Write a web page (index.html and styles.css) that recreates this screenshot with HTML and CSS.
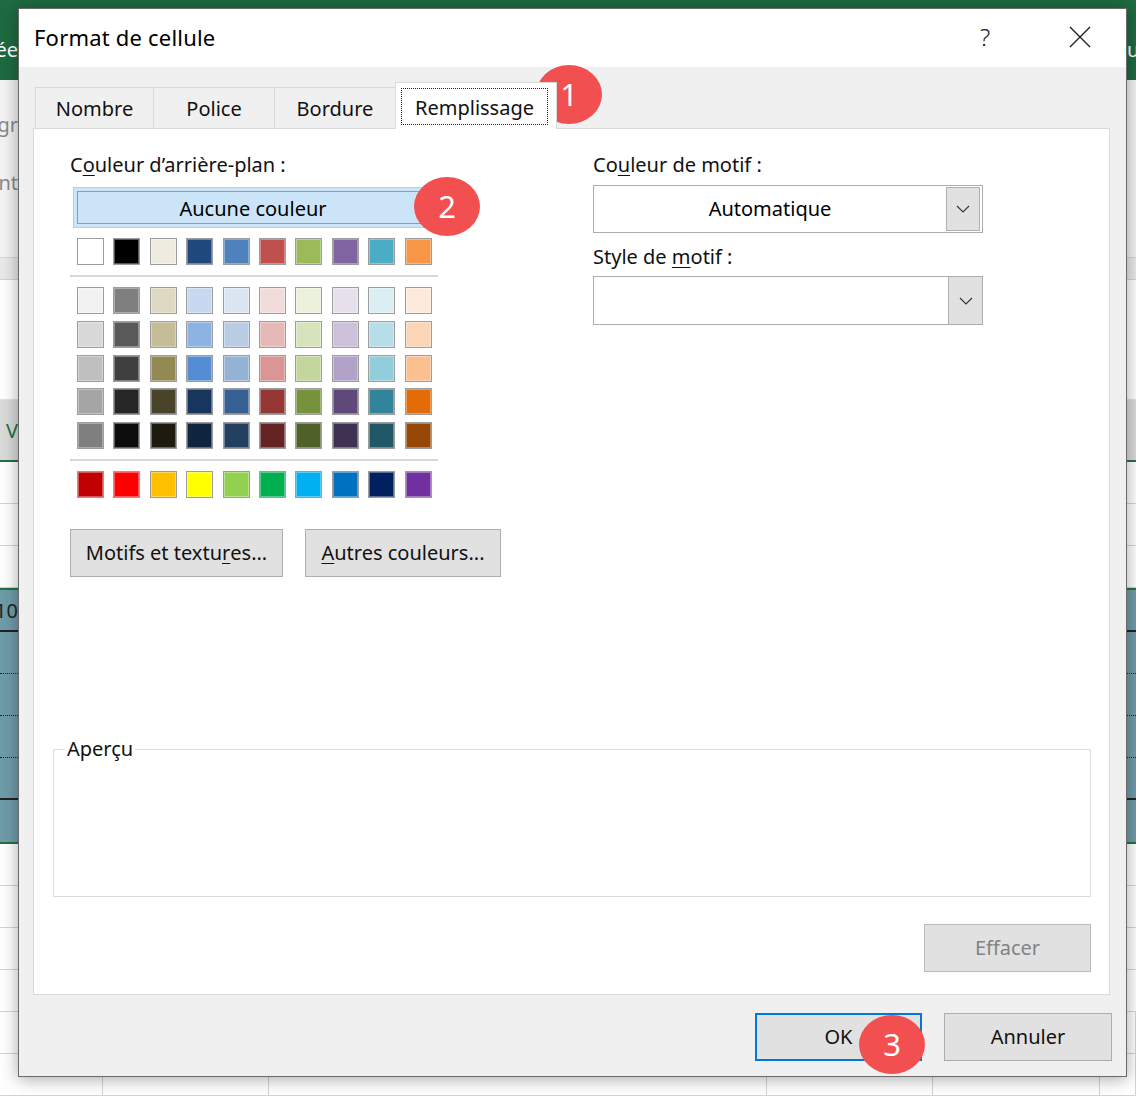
FILE: index.html
```html
<!DOCTYPE html>
<html lang="fr">
<head>
<meta charset="utf-8">
<title>Format de cellule</title>
<link rel="stylesheet" href="styles.css">
</head>
<body>
<div class="screen">
  <div class="sheet">
    <div class="srow ribbon-top"><div class="edge-l light">ée</div><div class="mid"></div><div class="edge-r light">u</div></div>
    <div class="srow ribbon">
      <div class="ribbon-line"><div class="edge-l grey">gr</div><div class="mid"></div><div class="edge-r"></div></div>
      <div class="ribbon-line"><div class="edge-l grey">nt</div><div class="mid"></div><div class="edge-r"></div></div>
    </div>
    <div class="srow formula"></div>
    <div class="srow blank"></div>
    <div class="srow colhead"><div class="edge-l green-t">V</div><div class="mid"></div><div class="edge-r"></div></div>
    <div class="srow cell"></div>
    <div class="srow cell"></div>
    <div class="srow cell"></div>
    <div class="teal">
      <div class="trow solid"><div class="edge-l dark">10</div><div class="mid"></div><div class="edge-r"></div></div>
      <div class="trow dotted"></div>
      <div class="trow dotted"></div>
      <div class="trow dotted"></div>
      <div class="trow solid"></div>
      <div class="trow last"></div>
    </div>
    <div class="srow cell"></div>
    <div class="srow cell"></div>
    <div class="srow cell"></div>
    <div class="srow cell"></div>
    <div class="srow cell grid"><div></div><div></div><div></div><div></div><div></div><div></div></div>
    <div class="srow cell grid"><div></div><div></div><div></div><div></div><div></div><div></div></div>
  </div>

  <div class="dialog">
    <div class="titlebar">
      <div class="title">Format de cellule</div>
      <div class="help">?</div>
      <div class="close">
        <svg width="22" height="22" viewBox="0 0 22 22"><path d="M1 1 L21 21 M21 1 L1 21" stroke="#222" stroke-width="1.4" fill="none"/></svg>
      </div>
    </div>
    <div class="dbody">
      <div class="tabs">
        <div class="tab t1">Nombre</div>
        <div class="tab t2">Police</div>
        <div class="tab t3">Bordure</div>
        <div class="tab active"><span class="focus">Remplissage</span></div>
      </div>
      <div class="panel">
        <div class="cols">
          <div class="lcol">
            <div class="label">C<u>o</u>uleur d’arrière-plan :</div>
            <div class="nocolor"><div class="nocolor-in">Aucune couleur</div></div>
            <div class="swatches first">
              <i style="background:#ffffff"></i><i style="background:#000000"></i><i style="background:#eeece1"></i><i style="background:#1f497d"></i><i style="background:#4f81bd"></i><i style="background:#c0504d"></i><i style="background:#9bbb59"></i><i style="background:#8064a2"></i><i style="background:#4bacc6"></i><i style="background:#f79646"></i>
            </div>
            <div class="sep"></div>
            <div class="swatches tints">
              <i style="background:#f2f2f2"></i><i style="background:#7f7f7f"></i><i style="background:#ddd9c3"></i><i style="background:#c6d9f0"></i><i style="background:#dbe5f1"></i><i style="background:#f2dcdb"></i><i style="background:#ebf1dd"></i><i style="background:#e5e0ec"></i><i style="background:#dbeef3"></i><i style="background:#fdeada"></i>
              <i style="background:#d8d8d8"></i><i style="background:#595959"></i><i style="background:#c4bd97"></i><i style="background:#8db3e2"></i><i style="background:#b8cce4"></i><i style="background:#e5b9b7"></i><i style="background:#d7e3bc"></i><i style="background:#ccc1d9"></i><i style="background:#b7dde8"></i><i style="background:#fbd5b5"></i>
              <i style="background:#bfbfbf"></i><i style="background:#3f3f3f"></i><i style="background:#938953"></i><i style="background:#548dd4"></i><i style="background:#95b3d7"></i><i style="background:#d99694"></i><i style="background:#c3d69b"></i><i style="background:#b2a2c7"></i><i style="background:#92cddc"></i><i style="background:#fac08f"></i>
              <i style="background:#a5a5a5"></i><i style="background:#262626"></i><i style="background:#494429"></i><i style="background:#17365d"></i><i style="background:#366092"></i><i style="background:#953734"></i><i style="background:#76923c"></i><i style="background:#5f497a"></i><i style="background:#31859b"></i><i style="background:#e36c09"></i>
              <i style="background:#7f7f7f"></i><i style="background:#0c0c0c"></i><i style="background:#1d1b10"></i><i style="background:#0f243e"></i><i style="background:#244061"></i><i style="background:#632423"></i><i style="background:#4f6128"></i><i style="background:#3f3151"></i><i style="background:#205867"></i><i style="background:#974806"></i>
            </div>
            <div class="sep"></div>
            <div class="swatches std">
              <i style="background:#c00000"></i><i style="background:#ff0000"></i><i style="background:#ffc000"></i><i style="background:#ffff00"></i><i style="background:#92d050"></i><i style="background:#00b050"></i><i style="background:#00b0f0"></i><i style="background:#0070c0"></i><i style="background:#002060"></i><i style="background:#7030a0"></i>
            </div>
            <div class="btnrow">
              <div class="btn motifs">Motifs et textu<u>r</u>es...</div>
              <div class="btn autres"><u>A</u>utres couleurs...</div>
            </div>
          </div>
          <div class="rcol">
            <div class="label">Co<u>u</u>leur de motif :</div>
            <div class="combo c1">
              <div class="combo-text">Automatique</div>
              <div class="combo-btn"><svg width="14" height="8" viewBox="0 0 14 8"><path d="M1 1 L7 7 L13 1" stroke="#333" stroke-width="1.1" fill="none"/></svg></div>
            </div>
            <div class="label l2">Style de <u>m</u>otif :</div>
            <div class="combo c2">
              <div class="combo-text"></div>
              <div class="combo-btn"><svg width="14" height="8" viewBox="0 0 14 8"><path d="M1 1 L7 7 L13 1" stroke="#333" stroke-width="1.1" fill="none"/></svg></div>
            </div>
          </div>
        </div>
        <fieldset class="preview">
          <legend>Aperçu</legend>
          <div class="preview-area"></div>
        </fieldset>
        <div class="clear-row"><div class="btn effacer">Effacer</div></div>
      </div>
      <div class="footer">
        <div class="btn ok">OK</div>
        <div class="btn cancel">Annuler</div>
      </div>
    </div>
  </div>

  <div class="badge b1">1</div>
  <div class="badge b2">2</div>
  <div class="badge b3">3</div>
</div>
</body>
</html>
```

FILE: styles.css
```css
* { box-sizing: border-box; }
body { margin: 0; font-family: "Noto Sans", "Open Sans", sans-serif; color: #000; }
.screen { position: relative; width: 1136px; height: 1097px; overflow: hidden; background: #fff; }

/* background spreadsheet */
.sheet { display: flex; flex-direction: column; width: 1136px; }
.srow { display: flex; width: 100%; }
.mid { flex: 1; }
.edge-l { width: 18px; overflow: hidden; display: flex; justify-content: flex-end; white-space: nowrap; font-size: 20px; }
.edge-r { width: 9px; overflow: hidden; white-space: nowrap; font-size: 20px; }
.light { color: #fff; }
.grey { color: #8a8a8a; }
.dark { color: #222; }
.green-t { color: #217346; }
.ribbon-top { height: 80px; background: #1e6b41; align-items: center; padding-top: 18px; }
.ribbon { height: 178px; background: #f3f3f3; flex-direction: column; padding-top: 30px; gap: 30px; border-bottom: 1px solid #d6d6d6; }
.ribbon-line { display: flex; height: 28px; align-items: center; }
.formula { height: 22px; background: #e9e9e9; border-bottom: 1px solid #d4d4d4; }
.blank { height: 120px; background: #fff; border-bottom: 1px solid #e1e1e1; }
.colhead { height: 62px; background: #dadada; border-bottom: 2px solid #217346; align-items: center; }
.cell { height: 42px; border-bottom: 1px solid #d4d4d4; }
.teal { background: #6f9caa; border-top: 2px solid #217346; border-bottom: 2px solid #217346; display: flex; flex-direction: column; }
.trow { height: 42px; display: flex; align-items: center; }
.trow.solid { border-bottom: 2px solid #222; }
.trow.dotted { border-bottom: 1px dotted #222; }
.trow.last { height: 42px; }
.grid { display: grid; grid-template-columns: 103px 166px 498px 166px 167px 1fr; }
.grid > div { border-right: 1px solid #d4d4d4; }

/* dialog */
.dialog { position: absolute; left: 18px; top: 8px; width: 1109px; height: 1069px; border: 1px solid #6a6a6a; background: #f0f0f0; box-shadow: 0 2px 16px rgba(0,0,0,0.35); display: flex; flex-direction: column; }
.titlebar { height: 58px; background: #fff; display: flex; align-items: center; padding-left: 15px; flex: none; }
.title { flex: 1; font-size: 22px; letter-spacing: 0.2px; padding-bottom: 2px; }
.help { width: 46px; text-align: center; font-size: 24px; font-weight: 300; color: #222; padding-bottom: 4px; }
.close { width: 46px; margin-left: 49px; margin-right: 23px; display: flex; justify-content: center; padding-bottom: 2px; }

.dbody { flex: 1; display: flex; flex-direction: column; }
.tabs { display: flex; align-items: flex-end; height: 46px; margin-top: 15px; padding-left: 16px; position: relative; z-index: 1; }
.tab { height: 41px; border-top: 1px solid #d9d9d9; border-left: 1px solid #d9d9d9; display: flex; align-items: center; justify-content: center; font-size: 20px; color: #111; padding-top: 1px; }
.t1 { width: 118px; }
.t2 { width: 121px; }
.t3 { width: 121px; }
.tab.active { width: 162px; height: 47px; margin-bottom: -1px; background: #fff; border: 1px solid #d9d9d9; border-bottom: none; padding: 5px 8px 2px 5px; display: block; }
.focus { display: flex; align-items: center; justify-content: center; height: 37px; width: 147px; border: 1px dotted #222; padding-top: 1px; }

.panel { margin: 0 16px 0 14px; height: 867px; background: #fff; border: 1px solid #d9d9d9; display: flex; flex-direction: column; }
.cols { display: flex; padding-left: 36px; padding-top: 22px; }
.lcol { width: 368px; flex: none; display: flex; flex-direction: column; }
.rcol { width: 390px; flex: none; margin-left: 155px; display: flex; flex-direction: column; }
.label { height: 28px; font-size: 20px; line-height: 28px; color: #111; white-space: nowrap; }
.label.l2 { margin-top: 10px; }
u { text-decoration-thickness: 1px; text-underline-offset: 3px; }

.nocolor { margin: 8px 0 0 3px; width: 360px; height: 41px; border: 1px solid #a9d3f5; background: #cce4f7; padding: 3px; }
.nocolor-in { height: 100%; border: 1px solid #9a9a9a; display: flex; align-items: center; justify-content: center; font-size: 20px; padding-top: 1px; }

.swatches { display: grid; grid-template-columns: repeat(10, 27px); column-gap: 9.4px; margin-left: 7px; }
.swatches i { display: block; width: 27px; height: 27px; border: 1px solid #9d9d9d; box-shadow: inset 0 0 0 1px rgba(255,255,255,0.35); }
.swatches.first { margin-top: 10px; }
.swatches.tints { margin-top: 10px; row-gap: 6.75px; }
.swatches.std { margin-top: 10px; }
.sep { margin-top: 10px; height: 2px; background: #d7d7d7; width: 368px; }

.btnrow { display: flex; gap: 22px; margin-top: 31px; width: 440px; }
.btn { flex: none; height: 48px; background: #e1e1e1; border: 1px solid #adadad; display: flex; align-items: center; justify-content: center; font-size: 20px; color: #111; padding-bottom: 2px; white-space: nowrap; }
.motifs { width: 213px; }
.autres { width: 196px; }

.combo { display: flex; background: #fff; border: 1px solid #acacac; }
.c1 { margin-top: 6px; height: 48px; padding: 1px 2px 1px 0; }
.c2 { margin-top: 5px; height: 49px; }
.combo-text { flex: 1; display: flex; align-items: center; justify-content: center; font-size: 20px; padding-bottom: 2px; }
.combo-btn { width: 34px; background: #e1e1e1; border: 1px solid #b0b0b0; display: flex; align-items: center; justify-content: center; }
.c2 .combo-btn { border-width: 0 0 0 1px; width: 34px; }

.preview { margin: 158px 18px 0 19px; padding: 0; border: 1px solid #dcdcdc; min-width: 0; }
.preview legend { margin-left: 11px; padding: 0 2px; font-size: 20px; line-height: 28px; color: #111; }
.preview-area { height: 133px; }

.clear-row { display: flex; justify-content: flex-end; margin: 27px 18px 0 0; }
.effacer { width: 167px; color: #838383; border-color: #bcbcbc; }

.footer { display: flex; justify-content: flex-end; gap: 22px; margin-top: 18px; padding-right: 14px; }
.ok { width: 167px; border: 2px solid #0078d7; }
.cancel { width: 168px; }

.badge { position: absolute; width: 66px; height: 59px; border-radius: 50%; background: #f25050; color: #fff; font-size: 31px; display: flex; align-items: center; justify-content: center; padding-bottom: 2px; }
.b1 { left: 536px; top: 65px; }
.b2 { left: 414px; top: 177px; }
.b3 { left: 859px; top: 1015px; }
```
